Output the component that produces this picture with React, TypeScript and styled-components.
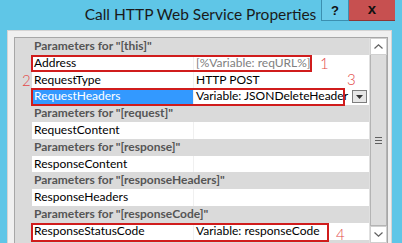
import React from 'react';
import styled, { createGlobalStyle } from 'styled-components';

const GlobalStyle = createGlobalStyle`
  html, body {
    margin: 0;
    padding: 0;
    background: #5fc6e7;
    overflow: hidden;
  }
`;

type Param = {
  name: string;
  value?: string;
  muted?: boolean;
  selected?: boolean;
  dropdown?: boolean;
  mark?: { width: number; height: number; top: number };
  label?: { text: string; left: number; top: number };
};

type Group = { title: string; params: Param[] };

const groups: Group[] = [
  {
    title: 'Parameters for "[this]"',
    params: [
      {
        name: 'Address',
        value: '[%Variable: reqURL%]',
        muted: true,
        mark: { width: 281, height: 17, top: 0 },
        label: { text: '1', left: 305, top: 0 },
      },
      {
        name: 'RequestType',
        value: 'HTTP POST',
        label: { text: '2', left: 7, top: 0 },
      },
      {
        name: 'RequestHeaders',
        value: 'Variable: JSONDeleteHeader',
        selected: true,
        dropdown: true,
        mark: { width: 314, height: 18, top: 0 },
        label: { text: '3', left: 332, top: -17 },
      },
    ],
  },
  { title: 'Parameters for "[request]"', params: [{ name: 'RequestContent' }] },
  { title: 'Parameters for "[response]"', params: [{ name: 'ResponseContent' }] },
  { title: 'Parameters for "[responseHeaders]"', params: [{ name: 'ResponseHeaders' }] },
  {
    title: 'Parameters for "[responseCode]"',
    params: [
      {
        name: 'ResponseStatusCode',
        value: 'Variable: responseCode',
        mark: { width: 298, height: 19, top: 0 },
        label: { text: '4', left: 321, top: 3 },
      },
    ],
  },
];

const App = () => {
  return (
    <>
      <GlobalStyle />
      <Window>
        <TitleBar>
          <Title>Call HTTP Web Service Properties</Title>
          <Controls>
            <HelpButton>?</HelpButton>
            <CloseButton>x</CloseButton>
          </Controls>
        </TitleBar>
        <Panel>
          <PropertyGrid>
            <Rows>
              {groups.map((g) => (
                <React.Fragment key={g.title}>
                  <CategoryRow>{g.title}</CategoryRow>
                  {g.params.map((p) => (
                    <PropRow key={p.name}>
                      <Gutter />
                      <NameCell $selected={p.selected}>{p.name}</NameCell>
                      <ValueCell $muted={p.muted}>
                        <span>{p.value}</span>
                        {p.dropdown && (
                          <DropButton>
                            <svg width="7" height="4" viewBox="0 0 7 4">
                              <path d="M0 0h7L3.5 4z" fill="#333" />
                            </svg>
                          </DropButton>
                        )}
                      </ValueCell>
                      {p.mark && (
                        <Mark
                          style={{ width: p.mark.width, height: p.mark.height, top: p.mark.top }}
                        />
                      )}
                      {p.label && (
                        <Callout style={{ left: p.label.left, top: p.label.top }}>
                          {p.label.text}
                        </Callout>
                      )}
                    </PropRow>
                  ))}
                </React.Fragment>
              ))}
            </Rows>
            <ScrollBar>
              <ScrollArrow>
                <svg width="9" height="5" viewBox="0 0 9 5">
                  <path d="M0.5 4.5L4.5 0.8L8.5 4.5" stroke="#606060" strokeWidth="1.2" fill="none" />
                </svg>
              </ScrollArrow>
              <Thumb>
                <Grip />
                <Grip />
                <Grip />
              </Thumb>
              <ScrollArrow>
                <svg width="9" height="5" viewBox="0 0 9 5">
                  <path d="M0.5 0.5L4.5 4.2L8.5 0.5" stroke="#606060" strokeWidth="1.2" fill="none" />
                </svg>
              </ScrollArrow>
            </ScrollBar>
          </PropertyGrid>
        </Panel>
      </Window>
    </>
  );
};

const Window = styled.div`
  width: 402px;
  height: 243px;
  display: flex;
  flex-direction: column;
  background: #5fc6e7;
  font-family: 'Lato', 'Liberation Sans', sans-serif;
  overflow: hidden;
`;

const TitleBar = styled.div`
  height: 30px;
  display: flex;
  align-items: flex-start;
  flex-shrink: 0;
`;

const Title = styled.div`
  flex: 1;
  padding-left: 80px;
  text-align: center;
  line-height: 29px;
  font-size: 15.5px;
  color: #1a1a1a;
  white-space: nowrap;
`;

const Controls = styled.div`
  display: flex;
  margin-right: 7px;
`;

const HelpButton = styled.div`
  width: 26px;
  height: 20px;
  border: 1px solid #3b8fb0;
  border-top: none;
  background: #6ccbea;
  display: flex;
  align-items: center;
  justify-content: center;
  font-family: 'Liberation Sans', sans-serif;
  font-weight: 700;
  font-size: 13px;
  color: #111;
`;

const CloseButton = styled.div`
  width: 46px;
  height: 21px;
  box-sizing: border-box;
  border-bottom: 1px solid #8e3535;
  background: #c75050;
  display: flex;
  align-items: center;
  justify-content: center;
  font-family: 'Liberation Sans', sans-serif;
  font-weight: 700;
  font-size: 15px;
  line-height: 1;
  padding-bottom: 3px;
  color: #111;
`;

const Panel = styled.div`
  flex: 1;
  margin: 0 10px 0 7px;
  background: #f0f0f0;
  border: 1px solid #d4d4d4;
  border-bottom: none;
  padding: 6px 3px 0 6px;
  display: flex;
  flex-direction: column;
`;

const PropertyGrid = styled.div`
  flex: 1;
  display: flex;
  border: 1px solid #a7a7a7;
  border-bottom: none;
  background: #dadada;
`;

const Rows = styled.div`
  flex: 1;
  display: flex;
  flex-direction: column;
`;

const CategoryRow = styled.div`
  height: 16.8px;
  line-height: 16.8px;
  padding-left: 19px;
  background: #dadada;
  font-size: 12px;
  font-weight: 700;
  color: #555555;
  white-space: nowrap;
  overflow: hidden;
`;

const PropRow = styled.div`
  position: relative;
  height: 16.8px;
  display: grid;
  grid-template-columns: 17px 162px 1fr;
  font-size: 12px;
  line-height: 16.8px;
`;

const Gutter = styled.div`
  background: #dadada;
`;

const NameCell = styled.div<{ $selected?: boolean }>`
  padding-left: 2px;
  background: ${({ $selected }) => ($selected ? '#3399ff' : '#ffffff')};
  color: ${({ $selected }) => ($selected ? '#ffffff' : '#000000')};
  border-right: 1px solid #f0f0f0;
  white-space: nowrap;
`;

const ValueCell = styled.div<{ $muted?: boolean }>`
  display: flex;
  align-items: center;
  justify-content: space-between;
  padding-left: 2px;
  padding-right: 2px;
  background: #ffffff;
  color: ${({ $muted }) => ($muted ? '#808080' : '#000000')};
  white-space: nowrap;
`;

const DropButton = styled.div`
  width: 13px;
  height: 11px;
  border: 1px solid #7d7d7d;
  background: #e6e6e6;
  display: flex;
  align-items: center;
  justify-content: center;
`;

const Mark = styled.div`
  position: absolute;
  left: 16px;
  box-sizing: border-box;
  border: 2px solid #d01c1c;
  pointer-events: none;
`;

const Callout = styled.div`
  position: absolute;
  font-size: 15px;
  font-weight: 300;
  line-height: 16px;
  color: #e34848;
`;

const ScrollBar = styled.div`
  width: 17px;
  display: flex;
  flex-direction: column;
  background: #f0f0f0;
  border-left: 1px solid #e0e0e0;
`;

const ScrollArrow = styled.div`
  height: 17px;
  display: flex;
  align-items: center;
  justify-content: center;
  background: #ffffff;
  border: 1px solid #d0d0d0;
  box-sizing: border-box;
`;

const Thumb = styled.div`
  flex: 1;
  background: #dcdcdc;
  border: 1px solid #b4b4b4;
  border-top: none;
  display: flex;
  flex-direction: column;
  align-items: center;
  justify-content: center;
  gap: 2px;
`;

const Grip = styled.div`
  width: 7px;
  height: 1px;
  background: #606060;
`;

export default App;
